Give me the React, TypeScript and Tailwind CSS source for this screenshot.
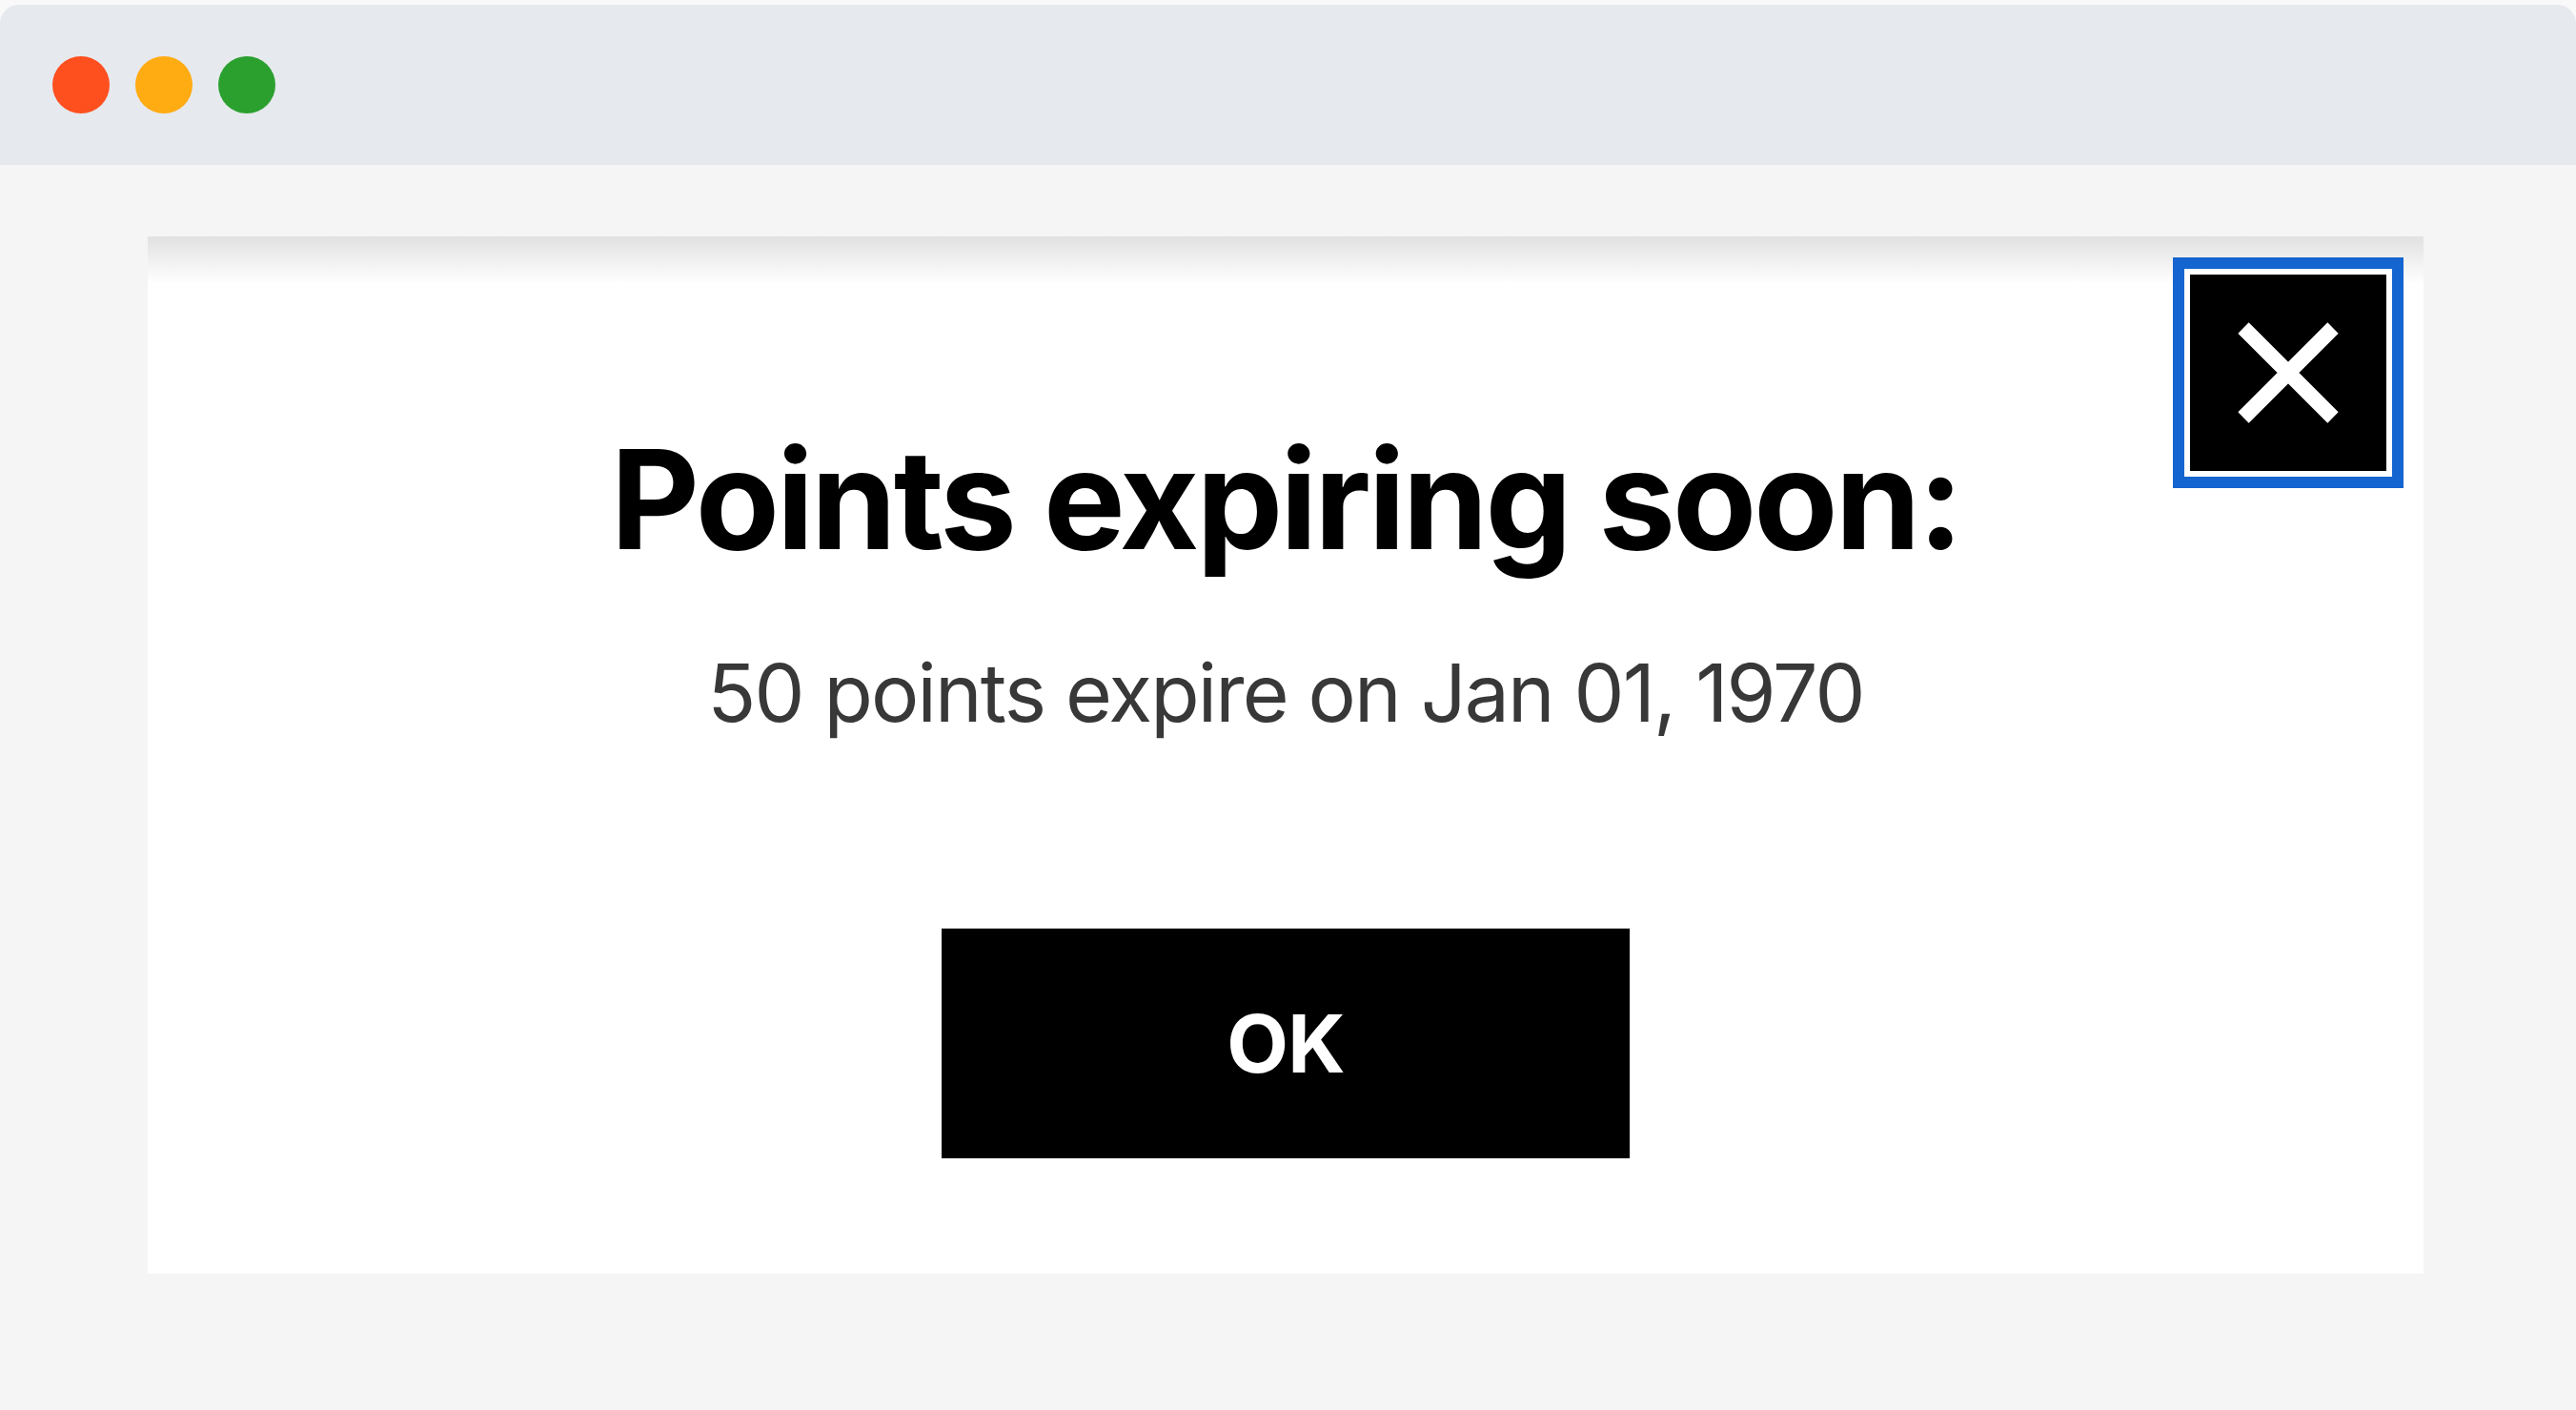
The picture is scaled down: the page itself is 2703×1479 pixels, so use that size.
const font = { fontFamily: "Inter, 'Noto Sans', sans-serif" };

function TrafficLights() {
  return (
    <div className="flex h-[168px] items-center gap-[27px] rounded-t-[20px] bg-[#e6e9ed] pl-[55px]">
      <span className="h-[60px] w-[60px] rounded-full bg-[#fe4f1f]" />
      <span className="h-[60px] w-[60px] rounded-full bg-[#ffab12]" />
      <span className="h-[60px] w-[60px] rounded-full bg-[#2ba02f]" />
    </div>
  );
}

function CloseButton() {
  return (
    <button
      type="button"
      aria-label="Close"
      className="absolute top-[40px] right-[39px] flex h-[206px] w-[206px] items-center justify-center bg-black ring-[12px] ring-[#1565d0] ring-offset-[6px] ring-offset-white"
    >
      <svg width="108" height="108" viewBox="0 0 108 108" fill="none">
        <path d="M7 7 L101 101 M101 7 L7 101" stroke="#fff" strokeWidth="16" />
      </svg>
    </button>
  );
}

export default function App() {
  return (
    <div className="min-h-[1479px] w-full bg-[#f9f9fa] pt-[5px]" style={font}>
      <div className="flex h-[1474px] flex-col rounded-t-[20px] bg-[#f5f5f5]">
        <TrafficLights />

        {/* Dialog */}
        <div className="mt-[75px] ml-[155px] mr-[160px] h-[1088px]">
          <div className="relative flex h-full flex-col items-center bg-[linear-gradient(to_bottom,#e1e1e1,#ffffff_50px)] pt-[204px]">
            <CloseButton />
            <h1 className="text-[144px] leading-none font-[750] tracking-[-0.021em] text-black">
              Points expiring soon:
            </h1>
            <p className="mt-[89px] text-[84px] leading-none tracking-[-0.022em] text-[#383838]">
              50 points expire on Jan 01, 1970
            </p>
            <button
              type="button"
              className="mt-[205px] flex h-[241px] w-[722px] items-center justify-center bg-black text-[84px] leading-none font-[750] tracking-[-0.01em] text-white"
            >
              OK
            </button>
          </div>
        </div>
      </div>
    </div>
  );
}
